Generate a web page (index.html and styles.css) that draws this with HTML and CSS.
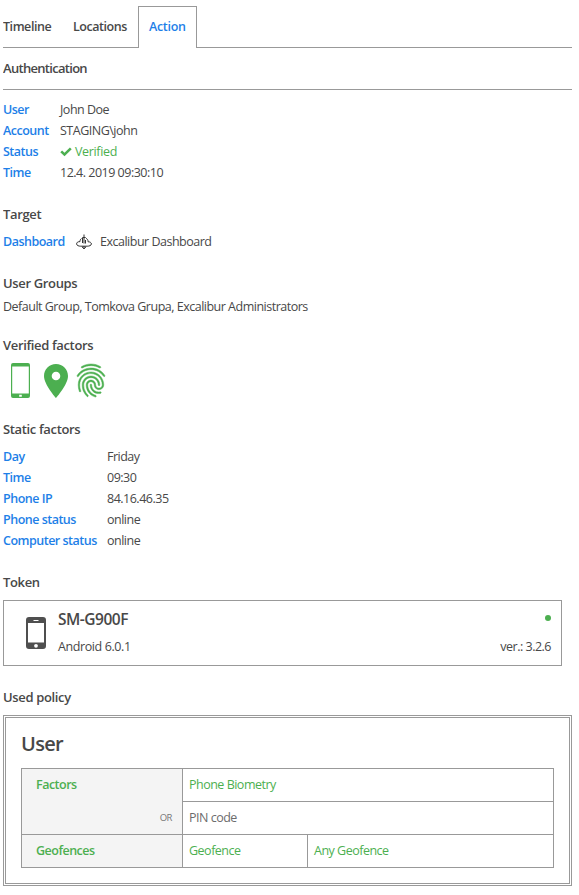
FILE: index.html
```html
<!DOCTYPE html>
<html lang="en">
<head>
<meta charset="utf-8">
<title>Action</title>
<link rel="stylesheet" href="styles.css">
</head>
<body>
<nav class="tabs">
  <a class="tab">Timeline</a><a class="tab locations">Locations</a><a class="tab active">Action</a>
</nav>
<h2 class="page-title">Authentication</h2>
<dl class="facts">
  <dt>User</dt><dd>John Doe</dd>
  <dt>Account</dt><dd>STAGING\john</dd>
  <dt>Status</dt><dd class="ok"><svg class="check" viewBox="0 0 12 10"><path d="M0.3 5.3 2.1 3.4 4.5 5.7 9.9 0.5 11.7 2.3 4.5 9.3Z"/></svg>Verified</dd>
  <dt>Time</dt><dd>12.4. 2019 09:30:10</dd>
</dl>
<section class="target">
  <h3>Target</h3>
  <div class="target-row"><b>Dashboard</b>
    <svg class="excalibur" viewBox="0 0 16 16"><path d="M8 .5v9M6.300 3.500h3.400M6.500 4v5M9.500 6v3.500M5.500 4.500C4.300 5.300 4 6.300 4 7.600 1.500 7.600 .6 8.700 .6 9.900c0 1.600 2 2.300 4.200 2.300h6.400c2 0 4.200-.7 4.200-2.300 0-1.300-1.400-2.100-3.300-2.100 0-1.700-.6-2.800-2-3.400M6.300 13h3.400L8 15Z"/></svg>
    <span>Excalibur Dashboard</span></div>
</section>
<section class="groups">
  <h3>User Groups</h3>
  <p>Default Group, Tomkova Grupa, Excalibur Administrators</p>
</section>
<section class="verified">
  <h3>Verified factors</h3>
  <div class="factor-icons">
    <svg class="i-phone" viewBox="0 0 19 35"><path fill-rule="evenodd" d="M2 0h15q2 0 2 2v31q0 2-2 2H2q-2 0-2-2V2Q0 0 2 0ZM1.2 3.5v27h16.6v-27ZM8.2 31.8v2h2.6v-2Z"/></svg>
    <svg class="i-pin" viewBox="0 0 24 34"><path fill-rule="evenodd" d="M12 0C5.2 0 0 5.2 0 12c0 8.7 12 22 12 22s12-13.300 12-22C24 5.200 18.800 0 12 0Zm0 7.700a4.300 4.300 0 1 1 0 8.600 4.300 4.300 0 0 1 0-8.600Z"/></svg>
    <svg class="i-finger" viewBox="3 2 18 20" preserveAspectRatio="none"><path d="M17.81 4.47c-.08 0-.16-.02-.23-.06C15.66 3.42 14 3 12.01 3c-1.98 0-3.86.47-5.57 1.41-.24.13-.54.04-.68-.2-.13-.24-.04-.55.2-.68C7.82 2.52 9.86 2 12.01 2c2.13 0 3.99.47 6.03 1.52.25.13.34.43.21.67-.09.18-.26.28-.44.28zM3.5 9.72c-.1 0-.2-.03-.29-.09-.23-.16-.28-.47-.12-.7.99-1.4 2.25-2.5 3.75-3.27C9.98 4.04 14 4.03 17.15 5.65c1.5.77 2.76 1.86 3.75 3.25.16.22.11.54-.12.7-.23.16-.54.11-.7-.12-.9-1.26-2.04-2.25-3.39-2.94-2.87-1.47-6.54-1.47-9.4.01-1.36.7-2.5 1.7-3.4 2.96-.08.14-.23.21-.39.21zm6.25 12.07c-.13 0-.26-.05-.35-.15-.87-.87-1.34-1.43-2.01-2.64-.69-1.23-1.05-2.73-1.05-4.34 0-2.97 2.54-5.39 5.66-5.39s5.66 2.42 5.66 5.39c0 .28-.22.5-.5.5s-.5-.22-.5-.5c0-2.42-2.09-4.39-4.66-4.39-2.57 0-4.66 1.97-4.66 4.39 0 1.44.32 2.77.93 3.85.64 1.15 1.08 1.64 1.85 2.42.19.2.19.51 0 .71-.11.1-.24.15-.37.15zm7.17-1.85c-1.19 0-2.24-.3-3.1-.89-1.49-1.01-2.38-2.65-2.38-4.39 0-.28.22-.5.5-.5s.5.22.5.5c0 1.41.72 2.74 1.94 3.56.71.48 1.54.71 2.54.71.24 0 .64-.03 1.04-.1.27-.05.53.13.58.41.05.27-.13.53-.41.58-.57.11-1.07.12-1.21.12zM14.91 22c-.04 0-.09-.01-.13-.02-1.59-.44-2.63-1.03-3.72-2.1-1.4-1.39-2.17-3.24-2.17-5.22 0-1.62 1.38-2.94 3.08-2.94 1.7 0 3.08 1.32 3.08 2.94 0 1.07.93 1.94 2.08 1.94s2.08-.87 2.08-1.94c0-3.77-3.25-6.83-7.25-6.83-2.84 0-5.44 1.58-6.61 4.03-.39.81-.59 1.76-.59 2.8 0 .78.07 2.01.67 3.61.1.26-.03.55-.29.64-.26.1-.55-.04-.64-.29-.49-1.31-.73-2.61-.73-3.96 0-1.2.23-2.29.68-3.24 1.33-2.79 4.28-4.6 7.51-4.6 4.55 0 8.25 3.51 8.25 7.83 0 1.62-1.38 2.94-3.08 2.94s-3.08-1.32-3.08-2.94c0-1.07-.93-1.94-2.08-1.94s-2.08.87-2.08 1.94c0 1.71.66 3.31 1.87 4.51.95.94 1.86 1.46 3.27 1.85.27.07.42.35.35.61-.05.23-.26.38-.47.38z"/></svg>
  </div>
</section>
<section class="static">
  <h3>Static factors</h3>
  <dl class="facts wide">
    <dt>Day</dt><dd>Friday</dd>
    <dt>Time</dt><dd>09:30</dd>
    <dt>Phone IP</dt><dd>84.16.46.35</dd>
    <dt>Phone status</dt><dd>online</dd>
    <dt>Computer status</dt><dd>online</dd>
  </dl>
</section>
<section class="token">
  <h3>Token</h3>
  <div class="card">
    <svg class="device" viewBox="0 0 20 32"><path fill-rule="evenodd" d="M3 0h14q3 0 3 3v26q0 3-3 3H3q-3 0-3-3V3Q0 0 3 0ZM2 6v19.500h16V6ZM7.500 3v1h5V3ZM10 26.900a1.900 1.900 0 1 0 0 3.800 1.900 1.900 0 0 0 0-3.800Z"/></svg>
    <div class="device-text"><strong>SM-G900F</strong><span>Android 6.0.1</span></div>
    <div class="device-state"><i class="dot"></i><span>ver.: 3.2.6</span></div>
  </div>
</section>
<section class="policy">
  <h3>Used policy</h3>
  <div class="policy-box">
    <h1>User</h1>
    <div class="grid">
      <div class="label factors">Factors<small>OR</small></div>
      <div class="cell full">Phone Biometry</div>
      <div class="cell full muted">PIN code</div>
      <div class="label">Geofences</div>
      <div class="cell">Geofence</div>
      <div class="cell">Any Geofence</div>
    </div>
  </div>
</section>
</body>
</html>
```
FILE: styles.css
```css
* { box-sizing: border-box; margin: 0; padding: 0; }
body {
  width: 569px; margin: 0 0 0 3px; padding-top: 6px;
  background: #fff; color: #484848;
  font: 12.5px/21px "Open Sans", "Noto Sans", sans-serif;
  letter-spacing: -.5px; white-space: nowrap;
}
svg { display: block; flex: none; fill: #4caf50; }
.tabs { display: flex; height: 42px; font-weight: 600; line-height: 41px; letter-spacing: -.45px; }
.tab { border-bottom: 1px solid #999; width: 70px; }
.tab.locations { width: 65px; }
.tab.active { width: 59px; padding-left: 10px; border: 1px solid #999; border-bottom: 0; color: #1e7fe8; line-height: 40px; letter-spacing: -.3px; }
.tabs::after { content: ""; flex: 1; border-bottom: 1px solid #999; }
h2, h3 { font-size: 13px; font-weight: 600; line-height: 21px; letter-spacing: -.35px; }
.page-title { height: 42px; line-height: 41px; border-bottom: 1px solid #999; letter-spacing: -.7px; }
.facts { display: grid; grid-template-columns: 57px 1fr; grid-auto-rows: 21px; margin-top: 9px; }
.facts.wide { grid-template-columns: 104px 1fr; margin-top: 6px; }
dt, b { font-weight: 600; color: #1e7fe8; }
.ok { display: flex; align-items: center; gap: 3px; color: #4caf50; letter-spacing: -.35px; }
.check { width: 12px; height: 10px; }
.target { margin-top: 21px; }
.target-row { display: flex; align-items: center; margin-top: 6px; height: 21px; }
.target-row b { width: 73px; }
.excalibur { width: 16px; height: 16px; margin-right: 8px; fill: none; stroke: #333; stroke-width: 1; }
.groups { margin-top: 21px; }
.groups p { margin-top: 2px; }
.verified { margin-top: 18px; }
.factor-icons { display: flex; height: 36px; margin: 7px 0 0 8px; }
.i-phone { width: 19px; height: 35px; margin-right: 14px; }
.i-pin { width: 24px; height: 34px; margin: 1px 8px 0 0; }
.i-finger { width: 28px; height: 33px; margin: 1px 0 0 .5px; overflow: visible; stroke: #4caf50; stroke-width: .3; }
.static { margin-top: 20px; }
.token { margin-top: 21px; }
.card { display: flex; width: 559px; height: 66px; margin-top: 7px; padding: 8px 10px 0 22px; border: 1px solid #999; }
.device { width: 20px; height: 32px; margin: 8px 12px 0 0; fill: #4f4f4f; }
.device-text { display: flex; flex-direction: column; gap: 6px; letter-spacing: -.4px; }
.device-text strong { font-size: 15.5px; font-weight: 600; letter-spacing: -.5px; }
.device-state { display: flex; flex-direction: column; align-items: flex-end; gap: 15px; margin-left: auto; padding-top: 6px; }
.dot { width: 6px; height: 6px; border-radius: 50%; background: #4caf50; }
.policy { margin-top: 21px; }
.policy-box { height: 171px; margin-top: 7px; padding: 12px 15px 0; border: 3px double #999; }
h1 { font-size: 20px; font-weight: 600; line-height: 28px; letter-spacing: -.7px; }
.grid {
  display: grid; grid-template-columns: 160px 124px 245px; grid-template-rows: repeat(3, 32px);
  gap: 1px; width: 533px; height: 100px; margin-top: 10px; padding: 1px; background: #999;
}
.label { padding: 5px 10px 0 14px; background: #f4f4f4; color: #4caf50; font-weight: 600; }
.factors { grid-row: span 2; display: flex; flex-direction: column; }
.factors small { margin-top: 12px; align-self: flex-end; color: #777; font-size: 9.500px; font-weight: 400; }
.cell { padding: 5px 6px 0; background: #fff; color: #4caf50; }
.full { grid-column: 2 / 4; }
.muted { color: #6c6c6c; }
```
